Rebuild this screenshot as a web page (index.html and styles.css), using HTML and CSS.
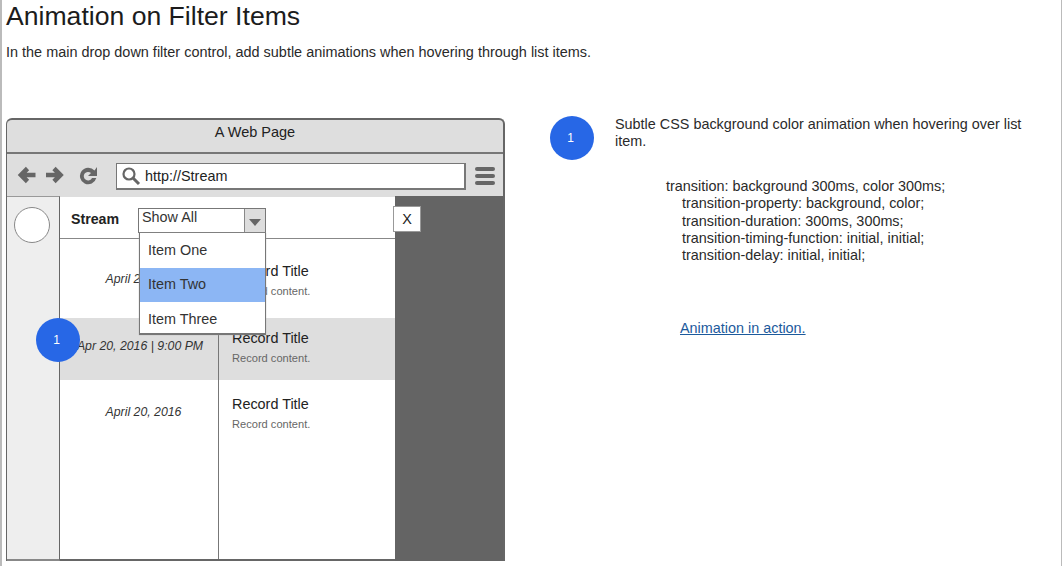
FILE: index.html
```html
<!DOCTYPE html>
<html lang="en">
<head>
<meta charset="utf-8">
<title>Animation on Filter Items</title>
<link rel="stylesheet" href="styles.css">
</head>
<body>
<div class="page">
  <header class="head">
    <h1>Animation on Filter Items</h1>
    <p>In the main drop down filter control, add subtle animations when hovering through list items.</p>
  </header>
  <main class="main">
    <section class="browser">
      <div class="titlebar">A Web Page</div>
      <div class="toolbar">
        <svg class="nav" width="84" height="24" viewBox="0 0 84 24">
          <path d="M4 11H18.500M10.500 4.500 4 11l6.500 6.500" fill="none" stroke="#666" stroke-width="4.600"/>
          <path d="M29 11H43.500M37 4.500 43.500 11 37 17.500" fill="none" stroke="#666" stroke-width="4.600"/>
          <path d="M77.500 6.500A8.300 8.300 0 1 0 79.300 14H75a4.300 4.300 0 1 1-1-5L71 12h9V3z" fill="#666"/>
        </svg>
        <div class="url">
          <svg width="20" height="20" viewBox="0 0 20 20"><circle cx="8" cy="8" r="5.500" fill="none" stroke="#666" stroke-width="2.200"/><path d="M12 12l6 6" stroke="#666" stroke-width="3"/></svg>
          <span>http://Stream</span>
        </div>
        <div class="burger"><i></i><i></i><i></i></div>
      </div>
      <div class="content">
        <aside class="side"><div class="avatar"></div></aside>
        <div class="stream">
          <div class="filterbar">
            <b>Stream</b>
            <div class="select"><span>Show All</span><em></em></div>
          </div>
          <div class="row">
            <div class="date">April 20, 2016</div>
            <div class="rec"><h2>Record Title</h2><small>Record content.</small></div>
          </div>
          <div class="row short hover">
            <div class="date">Apr 20, 2016 | 9:00 PM</div>
            <div class="rec"><h2>Record Title</h2><small>Record content.</small></div>
          </div>
          <div class="row last">
            <div class="date">April 20, 2016</div>
            <div class="rec"><h2>Record Title</h2><small>Record content.</small></div>
          </div>
          <ul class="menu">
            <li>Item One</li>
            <li class="on">Item Two</li>
            <li>Item Three</li>
          </ul>
        </div>
        <div class="overlay"></div>
        <div class="close">X</div>
        <div class="badge pin">1</div>
      </div>
    </section>
    <section class="notes">
      <div class="note">
        <div class="badge">1</div>
        <p>Subtle CSS background color animation when hovering over list item.</p>
      </div>
      <div class="code">
        <div>transition: background 300ms, color 300ms;</div>
        <div class="in">transition-property: background, color;</div>
        <div class="in">transition-duration: 300ms, 300ms;</div>
        <div class="in">transition-timing-function: initial, initial;</div>
        <div class="in">transition-delay: initial, initial;</div>
      </div>
      <a class="link" href="#">Animation in action.</a>
    </section>
  </main>
</div>
</body>
</html>
```

FILE: styles.css
```css
* { box-sizing: border-box; }
html, body { margin: 0; padding: 0; background: #fff; overflow: hidden; }
body { font-family: "Liberation Sans", Arial, sans-serif; color: #222; }
.page { width: 1062px; height: 566px; border-left: 2px solid #bbb; border-right: 1px solid #bbb; overflow: hidden; }
.head { height: 118px; padding: 0 0 0 4px; }
.head h1 { margin: 0; padding-top: 2px; font-size: 26.6px; line-height: 28px; font-weight: 400; color: #1c1c1c; }
.head p { margin: 14px 0 0; font-size: 14.45px; line-height: 16px; color: #2a2a2a; }
.main { display: flex; align-items: flex-start; padding-left: 4px; }

.browser { width: 499px; height: 443px; border: 2px solid #666; border-top-left-radius: 6px; border-top-right-radius: 6px; border-left-width: 1px; border-bottom: 0; display: flex; flex-direction: column; background: #dedede; }
.titlebar { height: 34px; border-bottom: 2px solid #777; text-align: center; font-size: 14.5px; line-height: 25px; color: #222; }
.toolbar { height: 43px; display: flex; align-items: center; padding: 0 8px 0 10px; background: #dedede; }
.nav { flex: none; }
.url { flex: none; width: 350px; height: 27px; margin: 2px 0 0 15px; border: 1px solid #777; border-bottom-width: 2px; border-right-width: 2px; background: #fff; display: flex; align-items: center; padding-left: 4px; font-size: 14.4px; gap: 4px; color: #222; }
.burger { flex: none; margin-left: 9px; width: 20px; display: flex; flex-direction: column; gap: 3px; }
.burger i { display: block; height: 4px; border-radius: 2px; background: #666; }

.content { flex: 1; display: flex; position: relative; min-height: 0; }
.side { width: 53px; background: #eee; border-right: 1px solid #666; border-bottom: 2px solid #888; border-top: 1px solid #999; padding: 10px 0 0 7px; margin-top: -1px; }
.avatar { width: 36px; height: 36px; border-radius: 50%; border: 1px solid #888; background: #fff; }
.stream { width: 335px; position: relative; background: #fff; border-bottom: 2px solid #666; display: flex; flex-direction: column; }
.filterbar { height: 42px; flex: none; border-bottom: 1px solid #888; display: flex; align-items: center; padding: 2px 0 0 11px; }
.filterbar b { font-size: 14.2px; width: 67px; color: #222; }
.select { width: 128px; height: 25px; margin-top: 3px; border: 1px solid #777; display: flex; background: #fff; font-size: 14.4px; color: #333; }
.select span { flex: 1; padding: 0 0 0 3px; }
.select em { width: 21px; background: #ddd; border-left: 1px solid #888; position: relative; }
.select em::after { content: ""; position: absolute; left: 4px; top: 10px; border: 6px solid transparent; border-top: 7px solid #666; border-bottom: 0; }
.row { display: flex; height: 79px; flex: none; }
.short { height: 62px; }
.last { flex: 1; }
.hover { background: #dedede; }
.date { width: 159px; flex: none; border-right: 1px solid #777; text-align: center; font-style: italic; font-size: 12.3px; color: #333; padding-top: 33px; padding-left: 9px; white-space: nowrap; }
.short .date { padding: 21px 0 0 2px; }
.last .date { padding-top: 25px; }
.rec { padding: 24px 0 0 13px; }
.short .rec { padding-top: 12px; }
.last .rec { padding-top: 16px; }
.rec h2 { margin: 0; font-size: 14.4px; line-height: 16px; font-weight: 400; color: #222; }
.rec small { display: block; margin-top: 6px; font-size: 11.1px; line-height: 12px; color: #666; }
.menu { position: absolute; left: 79px; top: 36px; width: 127px; margin: 0; padding: 0; list-style: none; background: #fff; border: 1px solid #777; border-top: 0; border-bottom-width: 2px; box-shadow: 0 0 1px #aaa; font-size: 14.4px; color: #333; }
.menu li { height: 34px; line-height: 33px; padding-left: 8px; }
.menu li:first-child { height: 35px; line-height: 34px; }
.menu li:last-child { height: 31px; line-height: 34px; }
.menu .on { background: #8cb6f4; }
.overlay { flex: 1; background: #646464; margin-top: -1px; }
.close { position: absolute; left: 386px; top: 9px; width: 28px; height: 26px; background: #fff; border: 1px solid #999; text-align: center; font-size: 14.4px; line-height: 25px; color: #222; }

.badge { width: 44px; height: 44px; flex: none; border-radius: 50%; background: #2767e6; color: #fff; text-align: center; font-size: 12px; line-height: 44px; padding-right: 3px; }
.pin { position: absolute; left: 29px; top: 121px; }

.notes { flex: 1; padding: 0 0 0 45px; }
.note { display: flex; align-items: flex-start; margin-top: -2px; }
.note p { margin: 0 0 0 21px; width: 416px; font-size: 14.4px; line-height: 17px; color: #2a2a2a; }
.code { margin: 18px 0 0 116px; font-size: 14.4px; line-height: 17.3px; color: #2a2a2a; }
.code .in { padding-left: 16px; }
.link { display: block; margin: 56px 0 0 130px; font-size: 14.4px; line-height: 16px; color: #1c5a9c; }
```
